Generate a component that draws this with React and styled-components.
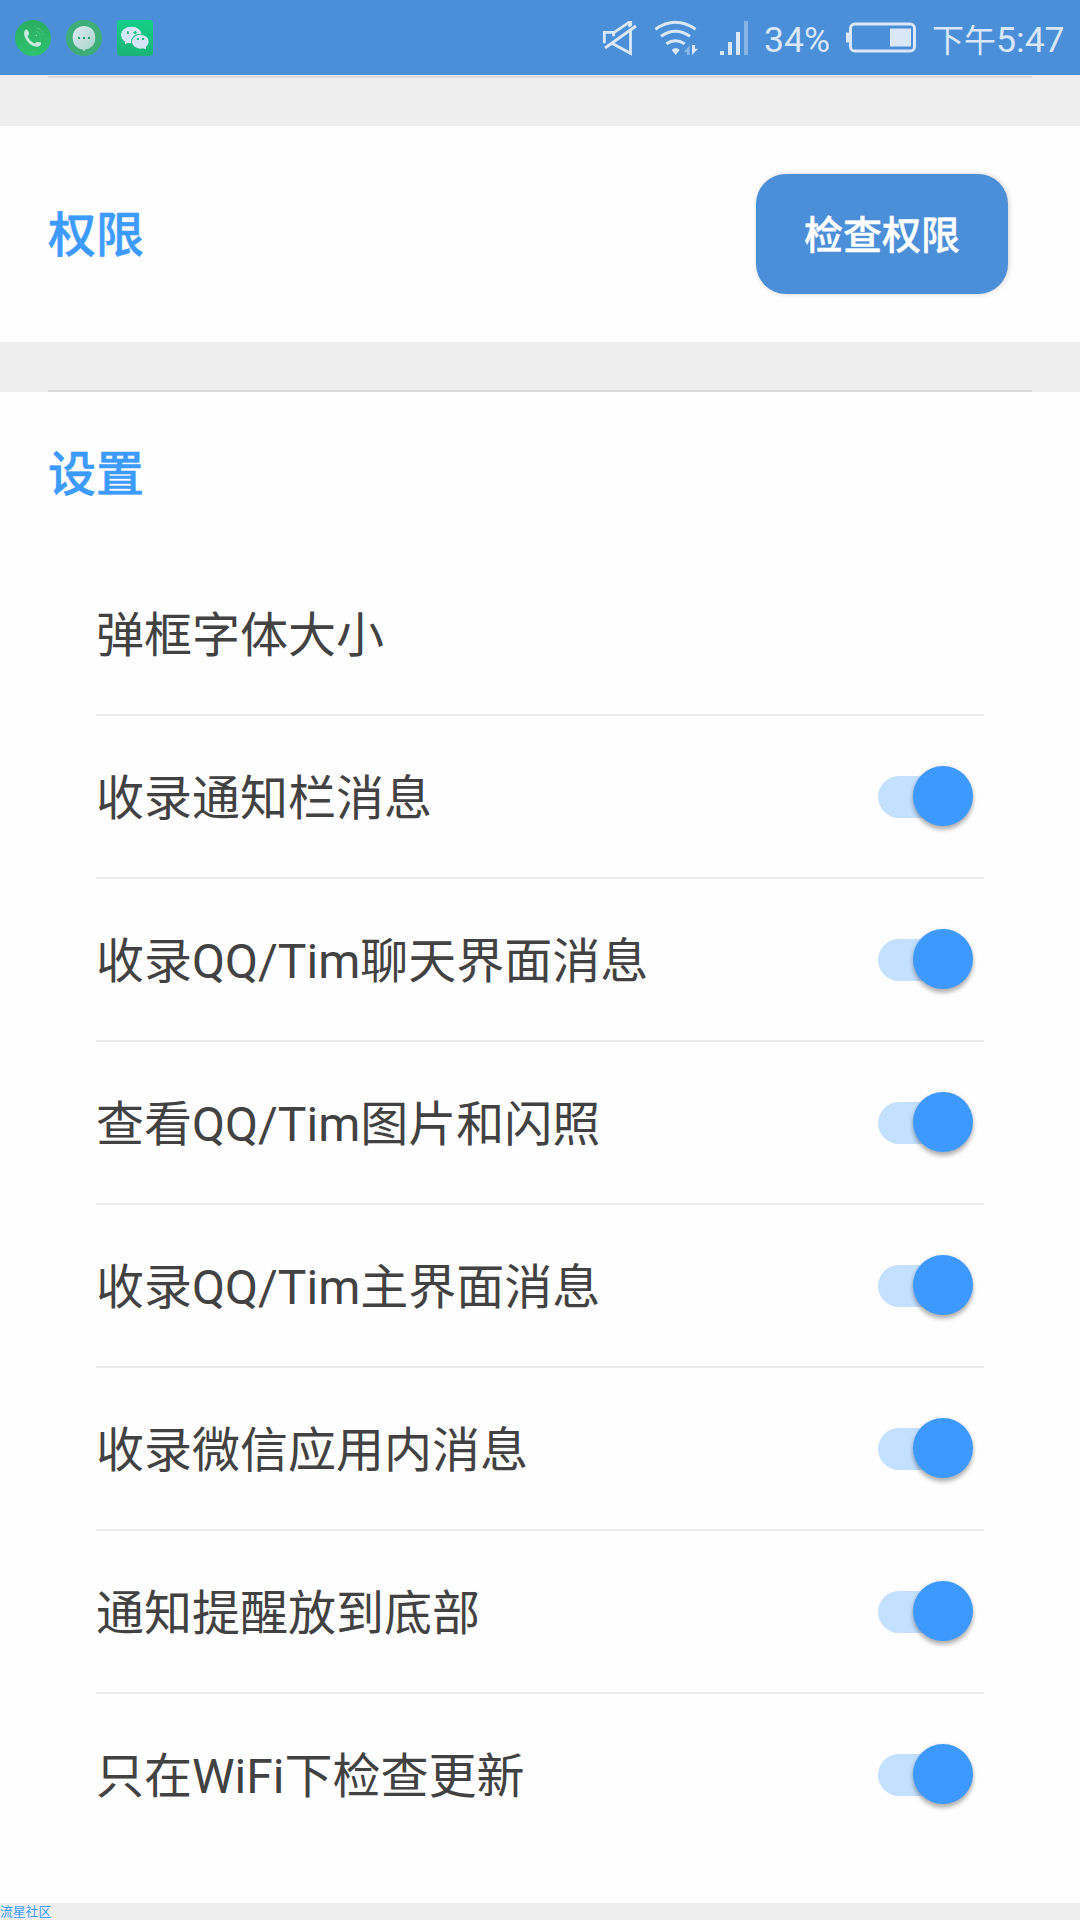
import React, { useState } from "react";
import styled, { createGlobalStyle } from "styled-components";

const GlobalStyle = createGlobalStyle`
  * {
    box-sizing: border-box;
  }
  body {
    margin: 0;
    background-color: #eee;
    font-family: Roboto, "Noto Sans CJK SC", sans-serif;
  }
`;

const Page = styled.div`
  width: 1080px;
  height: 1920px;
  overflow: hidden;
  display: flex;
  flex-direction: column;
  background-color: #eee;
`;

const StatusBarStyle = styled.header`
  flex: none;
  height: 75px;
  padding: 0 0 0 15px;
  display: flex;
  align-items: center;
  justify-content: space-between;
  background-color: #4b8fd8;
  color: #d9e7f7;
  font-size: 35.6px;
  line-height: 75px;
  white-space: nowrap;

  svg {
    display: block;
    flex: none;
  }
  .notifications {
    display: flex;
    gap: 15px;
  }
  .system {
    width: 478px;
    display: flex;
    align-items: center;
  }
`;

const Percent = styled.span`
  width: 81px;
  margin-left: 15px;
  padding-top: 5px;
`;

const Clock = styled.span`
  margin-left: 15px;
  padding-top: 6px;

  small {
    font-size: 32px;
  }
`;

const Gap = styled.div`
  flex: none;
  height: ${(props) => props.$height}px;
  padding: ${(props) => (props.$top ? "1px 48px 0" : "0 48px")};
  display: flex;
  flex-direction: column;
  justify-content: ${(props) => (props.$top ? "flex-start" : "flex-end")};

  &::after {
    content: "";
    height: 2px;
    background-color: #dbdbdb;
  }
`;

const Section = styled.section`
  flex: none;
  height: ${(props) => props.$height}px;
  background-color: #fefefe;
`;

const PermissionRow = styled.div`
  height: 100%;
  padding: 0 72px 0 48px;
  display: flex;
  align-items: center;
  justify-content: space-between;
`;

const Title = styled.h2`
  margin: 0;
  padding-top: 4px;
  color: #3d9aff;
  font-size: 48px;
  font-weight: 500;
  line-height: 72px;
  -webkit-text-stroke: 0.5px #3d9aff;
`;

const CheckButton = styled.button`
  width: 252px;
  height: 120px;
  padding: 0 0 4px;
  border: none;
  border-radius: 30px;
  background-color: #4b8fd8;
  box-shadow: 1px 0 5px rgba(0, 0, 0, 0.18);
  color: #fff;
  font-family: inherit;
  font-size: 39px;
  font-weight: 500;
  -webkit-text-stroke: 0.4px #fff;
`;

const SettingsHeader = styled.div`
  height: 161px;
  padding: 43px 48px 0;
`;

const List = styled.ul`
  margin: 0;
  padding: 0 96px;
  list-style: none;
`;

const Row = styled.li`
  height: 163px;
  padding-right: 10px;
  display: flex;
  align-items: center;
  justify-content: space-between;
  border-bottom: 2px solid #ebebeb;
  color: #424242;
  font-size: 48px;
  line-height: 72px;

  span {
    padding-top: 4px;
  }
  &:last-child {
    border-bottom-color: transparent;
  }
`;

const Track = styled.button`
  position: relative;
  width: 96px;
  height: 61px;
  padding: 0;
  border: none;
  background: none;

  &::before {
    position: absolute;
    content: "";
    top: 10px;
    left: 0;
    width: 90px;
    height: 42px;
    border-radius: 21px;
    background-color: ${(props) => (props.$on ? "#c4e0ff" : "#d0d0d0")};
  }
`;

const Thumb = styled.i`
  position: absolute;
  top: 0;
  left: ${(props) => (props.$on ? 35 : -5)}px;
  width: 60px;
  height: 60px;
  border-radius: 50%;
  background-color: ${(props) => (props.$on ? "#3d99fd" : "#fafafa")};
  box-shadow: 0 4px 4px rgba(0, 0, 0, 0.24), 0 1px 5px rgba(0, 0, 0, 0.14);
`;

const Footer = styled.footer`
  height: 17px;
  color: #3d9aff;
  font-size: 12.8px;
  line-height: 17px;
`;

function PhoneIcon() {
  return (
    <svg width="36" height="36" viewBox="0 0 108 108">
      <defs>
        <linearGradient id="phone" x1="0" y1="0" x2="0" y2="1">
          <stop offset="0" stopColor="#2bae62" />
          <stop offset="1" stopColor="#2dc26f" />
        </linearGradient>
      </defs>
      <circle cx="54" cy="54" r="54" fill="url(#phone)" />
      <path
        d="M32 29C37 26 42 35 42 41C42 46 38 46 38 49C40 57 50 67 58 70C61 71 62 66 66 66L77 67C81 71 76 79 69 80C55 82 38 70 31 54C26 43 26 32 32 29Z"
        fill="#c9eae0"
      />
      <g fill="none" stroke="#8bd8b1" strokeWidth="2" strokeDasharray="4 4">
        <path d="M64 34Q73 37 75 47" />
        <path d="M66 25Q81 28 84 43" />
      </g>
      <circle cx="64" cy="46" r="2" fill="#c9eae0" />
    </svg>
  );
}

function MessageIcon() {
  return (
    <svg width="36" height="36" viewBox="0 0 108 108">
      <defs>
        <linearGradient id="bubble" x1="0" y1="0" x2="1" y2="1">
          <stop offset="0" stopColor="#dcebf5" />
          <stop offset="1" stopColor="#a9d3ca" />
        </linearGradient>
      </defs>
      <circle cx="54" cy="54" r="54" fill="#3fad78" />
      <path
        d="M54 18C75 18 88 33 88 53C88 71 77 85 59 88L54 94L49 88C31 85 20 71 20 53C20 33 33 18 54 18Z"
        fill="url(#bubble)"
      />
      <path d="M36 51h6v6h-6zM51 51h6v6h-6zM66 51h6v6h-6z" fill="#2aa263" />
    </svg>
  );
}

function WechatIcon() {
  return (
    <svg width="36" height="36" viewBox="0 0 108 108">
      <defs>
        <linearGradient id="wechat" x1="0" y1="0" x2="0" y2="1">
          <stop offset="0" stopColor="#14cf86" />
          <stop offset="1" stopColor="#1bb477" />
        </linearGradient>
      </defs>
      <rect width="108" height="108" rx="11" fill="url(#wechat)" />
      <g fill="#d6e6f6">
        <ellipse cx="43" cy="45" rx="31" ry="25" />
        <path d="M24 60v13l12-6z" />
      </g>
      <ellipse cx="70" cy="65" rx="28" ry="24" fill="#18c07e" />
      <g fill="#d6e6f6">
        <ellipse cx="70" cy="65" rx="25" ry="21" />
        <path d="M75 84l12 4v-11z" />
      </g>
      <g fill="#18bd7c">
        <path d="M30 34h5v8h-5zM49 36h3v-3h5v3h2v4h-2v3h-5v-3h-3z" />
        <path d="M60 54h6v6h-6zM75 54h6v6h-6z" />
      </g>
    </svg>
  );
}

function MuteIcon() {
  return (
    <svg width="36" height="36" viewBox="36 57 108 108">
      <g fill="none" stroke="#d9e7f7" strokeWidth="8.5">
        <path d="M43 127V94H71V106" />
        <path d="M67 98L117 64H122V72L115 76" />
        <path d="M45 141L138 75" />
        <path d="M121.5 86V157L64 126" />
      </g>
    </svg>
  );
}

function WifiIcon() {
  return (
    <svg width="45" height="36" viewBox="192 57 135 108">
      <g fill="none" stroke="#d9e7f7" strokeWidth="9">
        <path d="M196 85Q256 43 317 85" />
        <path d="M213 106Q256 75 300 106" />
        <path d="M229 128Q256 110 284 128" />
      </g>
      <path d="M245 147Q257 135 269 147L257 162Z" fill="#d9e7f7" />
      <path d="M299 133V162H291V152H282Z" fill="#8bb9e9" />
      <path d="M306 132H315V143H324L306 162Z" fill="#d9e7f7" />
    </svg>
  );
}

function SignalIcon() {
  return (
    <svg width="30" height="36" viewBox="387 57 90 108">
      <path
        d="M390 150h12v12h-12zM414 123h12v39h-12zM438 93h12v69h-12z"
        fill="#d9e7f7"
      />
      <path d="M462 60h12v102h-12z" fill="#86b4e6" />
    </svg>
  );
}

function BatteryIcon() {
  return (
    <svg width="72" height="36" viewBox="45 58.5 216 108">
      <rect
        x="61.5"
        y="70.5"
        width="192"
        height="81"
        rx="13"
        fill="none"
        stroke="#d9e7f7"
        strokeWidth="9"
      />
      <path d="M48 96h11v30h-11zM180 84h63v54h-63z" fill="#d9e7f7" />
    </svg>
  );
}

const SystemIcons = styled.div`
  display: grid;
  grid-template-columns: 52px 65px 30px;
`;

function StatusBar() {
  return (
    <StatusBarStyle>
      <div className="notifications">
        <PhoneIcon />
        <MessageIcon />
        <WechatIcon />
      </div>
      <div className="system">
        <SystemIcons>
          <MuteIcon />
          <WifiIcon />
          <SignalIcon />
        </SystemIcons>
        <Percent>34%</Percent>
        <BatteryIcon />
        <Clock>
          <small>下午</small>5:47
        </Clock>
      </div>
    </StatusBarStyle>
  );
}

function Switch() {
  const [on, setOn] = useState(true);
  return (
    <Track $on={on} onClick={() => setOn(!on)}>
      <Thumb $on={on} />
    </Track>
  );
}

export default function App() {
  const items = [
    { text: "弹框字体大小" },
    { text: "收录通知栏消息", toggle: true },
    { text: "收录QQ/Tim聊天界面消息", toggle: true },
    { text: "查看QQ/Tim图片和闪照", toggle: true },
    { text: "收录QQ/Tim主界面消息", toggle: true },
    { text: "收录微信应用内消息", toggle: true },
    { text: "通知提醒放到底部", toggle: true },
    { text: "只在WiFi下检查更新", toggle: true },
  ];
  return (
    <>
      <GlobalStyle />
      <Page>
        <StatusBar />
        <Gap $height={51} $top />
        <Section $height={216}>
          <PermissionRow>
            <Title>权限</Title>
            <CheckButton>检查权限</CheckButton>
          </PermissionRow>
        </Section>
        <Gap $height={50} />
        <Section $height={1511}>
          <SettingsHeader>
            <Title>设置</Title>
          </SettingsHeader>
          <List>
            {items.map((item, index) => (
              <Row key={index}>
                <span>{item.text}</span>
                {item.toggle && <Switch />}
              </Row>
            ))}
          </List>
        </Section>
        <Footer>流星社区</Footer>
      </Page>
    </>
  );
}
